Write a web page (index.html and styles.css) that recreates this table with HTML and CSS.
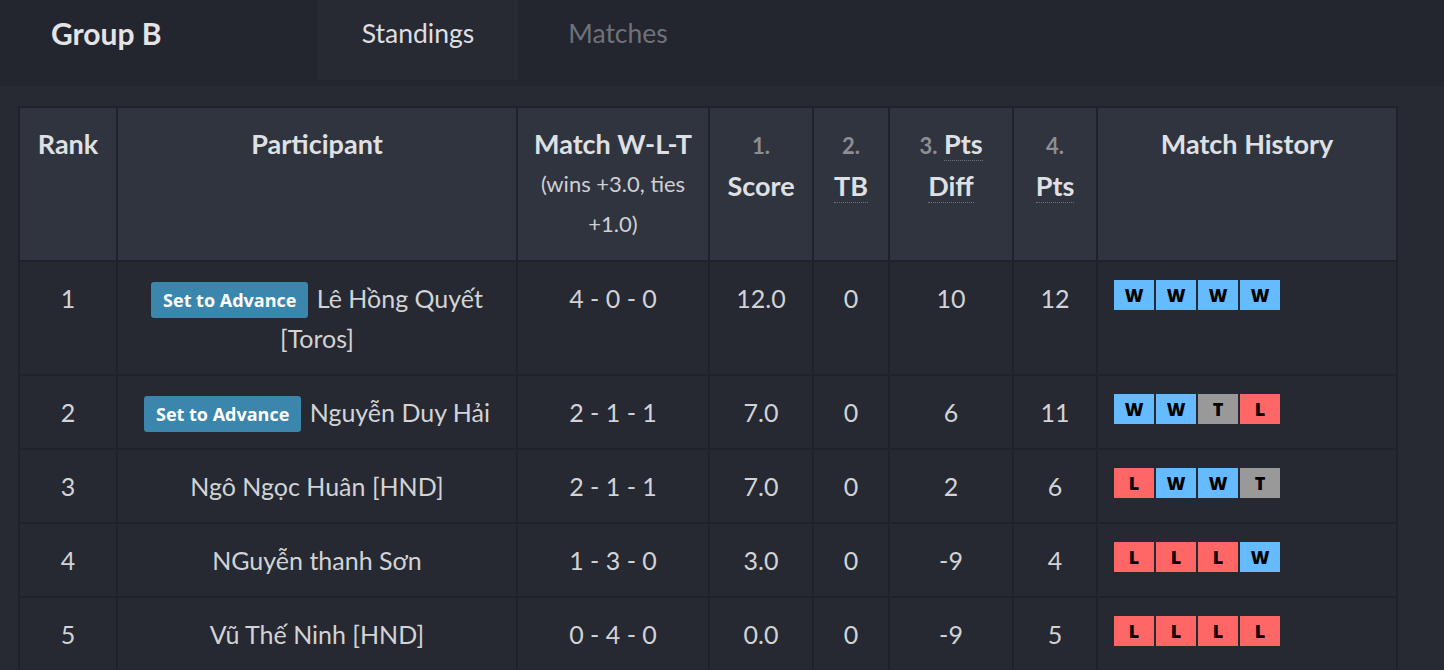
FILE: index.html
```html
<!DOCTYPE html>
<html lang="vi">
<head>
<meta charset="utf-8">
<title>Group B</title>
<link rel="stylesheet" href="styles.css">
</head>
<body>
<header class="topbar">
  <h1 class="title">Group B</h1>
  <nav class="tabs">
    <a class="tab active">Standings</a>
    <a class="tab">Matches</a>
  </nav>
</header>
<main class="content">
  <table class="standings">
    <colgroup>
      <col class="c-rank"><col class="c-part"><col class="c-wlt"><col class="c-score"><col class="c-tb"><col class="c-diff"><col class="c-pts"><col class="c-hist">
    </colgroup>
    <thead>
      <tr>
        <th>Rank</th>
        <th>Participant</th>
        <th>Match W-L-T<span class="sub">(wins +3.0, ties +1.0)</span></th>
        <th><span class="num">1.</span> Score</th>
        <th><span class="num">2.</span> <abbr>TB</abbr></th>
        <th><span class="num">3.</span> <abbr>Pts Diff</abbr></th>
        <th><span class="num">4.</span> <abbr>Pts</abbr></th>
        <th>Match History</th>
      </tr>
    </thead>
    <tbody>
      <tr>
        <td>1</td>
        <td><span class="btn">Set to Advance</span> Lê Hồng Quyết [Toros]</td>
        <td>4 - 0 - 0</td><td>12.0</td><td>0</td><td>10</td><td>12</td>
        <td class="hist"><div class="badges"><span class="b w">W</span><span class="b w">W</span><span class="b w">W</span><span class="b w">W</span></div></td>
      </tr>
      <tr>
        <td>2</td>
        <td><span class="btn">Set to Advance</span> Nguyễn Duy Hải</td>
        <td>2 - 1 - 1</td><td>7.0</td><td>0</td><td>6</td><td>11</td>
        <td class="hist"><div class="badges"><span class="b w">W</span><span class="b w">W</span><span class="b t">T</span><span class="b l">L</span></div></td>
      </tr>
      <tr>
        <td>3</td>
        <td>Ngô Ngọc Huân [HND]</td>
        <td>2 - 1 - 1</td><td>7.0</td><td>0</td><td>2</td><td>6</td>
        <td class="hist"><div class="badges"><span class="b l">L</span><span class="b w">W</span><span class="b w">W</span><span class="b t">T</span></div></td>
      </tr>
      <tr>
        <td>4</td>
        <td>NGuyễn thanh Sơn</td>
        <td>1 - 3 - 0</td><td>3.0</td><td>0</td><td>-9</td><td>4</td>
        <td class="hist"><div class="badges"><span class="b l">L</span><span class="b l">L</span><span class="b l">L</span><span class="b w">W</span></div></td>
      </tr>
      <tr>
        <td>5</td>
        <td>Vũ Thế Ninh [HND]</td>
        <td>0 - 4 - 0</td><td>0.0</td><td>0</td><td>-9</td><td>5</td>
        <td class="hist"><div class="badges"><span class="b l">L</span><span class="b l">L</span><span class="b l">L</span><span class="b l">L</span></div></td>
      </tr>
    </tbody>
  </table>
</main>
</body>
</html>
```

FILE: styles.css
```css
html, body {
  margin: 0;
  padding: 0;
  background: #272a33;
  font-family: "Lato", "Noto Sans", sans-serif;
  color: #d2d3d6;
}

.topbar {
  display: flex;
  align-items: flex-start;
  height: 86px;
  background: #23262e;
}

.title {
  margin: 0;
  width: 318px;
  box-sizing: border-box;
  padding: 15px 0 0 51px;
  font-size: 30px;
  line-height: 36px;
  font-weight: 700;
  color: #e4e4e6;
}

.tabs {
  display: flex;
}

.tab {
  display: block;
  width: 200px;
  height: 80px;
  box-sizing: border-box;
  padding-top: 15px;
  text-align: center;
  font-size: 26.5px;
  line-height: 36px;
  color: #6e727c;
}

.tab.active {
  background: #272a33;
  color: #dedfe2;
}

.content {
  padding: 20px 0 0 18px;
}

.standings {
  border-collapse: separate;
  border-spacing: 2px;
  background: #1f2228;
  table-layout: fixed;
  width: 1380px;
}

.c-rank { width: 96px; }
.c-part { width: 398px; }
.c-wlt { width: 190px; }
.c-score { width: 102px; }
.c-tb { width: 74px; }
.c-diff { width: 122px; }
.c-pts { width: 82px; }
.c-hist { width: 298px; }

.standings th,
.standings td {
  padding: 16px 12px;
  font-size: 25px;
  line-height: 40px;
  text-align: center;
  vertical-align: top;
}

.standings th {
  height: 120px;
  background: #30343f;
  font-size: 27px;
  font-weight: 700;
  color: #dfe0e3;
}

.standings td {
  background: #262931;
  font-weight: 400;
  color: #d2d3d6;
}

.standings th .sub {
  display: block;
  font-size: 22px;
  font-weight: 400;
  color: #cfd0d3;
}

.standings th .num {
  font-size: 22px;
  color: #8c8e93;
}

abbr {
  text-decoration: none;
  border-bottom: 1px dotted #6f727a;
}

.btn {
  display: inline-block;
  vertical-align: 1px;
  margin-right: 2px;
  padding: 0 12px;
  height: 36px;
  line-height: 36px;
  border-radius: 3px;
  background: #3b86ac;
  color: #ffffff;
  font-family: "Open Sans", "Lato", sans-serif;
  font-size: 18px;
  font-weight: 700;
}

.standings td.hist {
  padding-left: 16px;
  text-align: left;
}

.badges {
  display: flex;
  gap: 2px;
  margin-top: 2px;
}

.b {
  display: block;
  width: 40px;
  height: 30px;
  line-height: 30px;
  text-align: center;
  font-family: "Open Sans", sans-serif;
  font-size: 18px;
  font-weight: 800;
  color: #000;
}

.b.w { background: #66bbff; }
.b.l { background: #ff6666; }
.b.t { background: #999999; }
```
